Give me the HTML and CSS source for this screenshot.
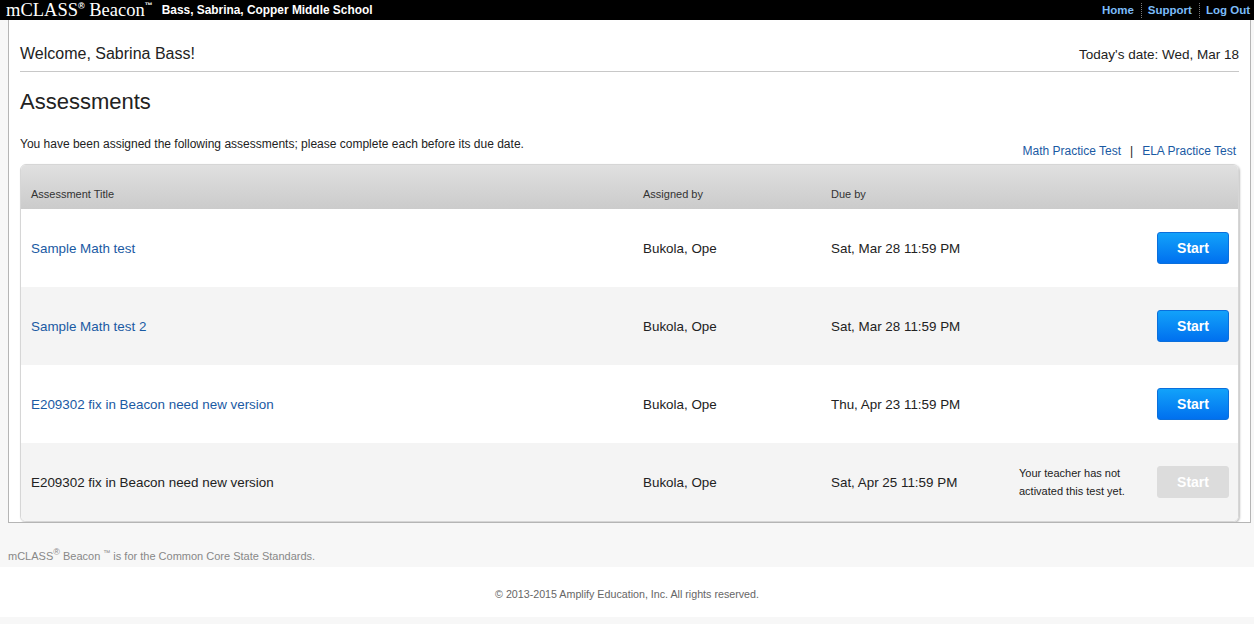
FILE: index.html
```html
<!DOCTYPE html>
<html>
<head>
<meta charset="utf-8">
<link rel="stylesheet" href="styles.css">
</head>
<body>
<header class="topbar">
  <div class="brand">
    <span class="logo">mCLASS<sup class="reg">®</sup> Beacon<sup class="tm">™</sup></span>
    <span class="school">Bass, Sabrina, Copper Middle School</span>
  </div>
  <nav class="nav">
    <a href="#">Home</a><span class="sep"></span><a href="#">Support</a><span class="sep"></span><a href="#">Log Out</a>
  </nav>
</header>
<main class="container">
  <div class="welcome">
    <span class="hello">Welcome, Sabrina Bass!</span>
    <span class="date">Today's date: Wed, Mar 18</span>
  </div>
  <h1 class="title">Assessments</h1>
  <div class="intro">
    <p class="intro-text">You have been assigned the following assessments; please complete each before its due date.</p>
    <div class="practice"><a href="#">Math Practice Test</a><span class="bar">|</span><a href="#">ELA Practice Test</a></div>
  </div>
  <div class="table">
    <div class="row head">
      <div>Assessment Title</div><div>Assigned by</div><div>Due by</div><div></div><div></div>
    </div>
    <div class="row">
      <div><a href="#">Sample Math test</a></div><div>Bukola, Ope</div><div>Sat, Mar 28 11:59 PM</div><div></div><div><button class="btn">Start</button></div>
    </div>
    <div class="row alt">
      <div><a href="#">Sample Math test 2</a></div><div>Bukola, Ope</div><div>Sat, Mar 28 11:59 PM</div><div></div><div><button class="btn">Start</button></div>
    </div>
    <div class="row">
      <div><a href="#">E209302 fix in Beacon need new version</a></div><div>Bukola, Ope</div><div>Thu, Apr 23 11:59 PM</div><div></div><div><button class="btn">Start</button></div>
    </div>
    <div class="row alt">
      <div>E209302 fix in Beacon need new version</div><div>Bukola, Ope</div><div>Sat, Apr 25 11:59 PM</div><div class="note">Your teacher has not<br>activated this test yet.</div><div><button class="btn disabled" disabled>Start</button></div>
    </div>
  </div>
</main>
<div class="standards">mCLASS<sup>®</sup> Beacon <sup class="tm2">™</sup> is for the Common Core State Standards.</div>
<footer class="copyright">© 2013-2015 Amplify Education, Inc. All rights reserved.</footer>
</body>
</html>
```
FILE: styles.css
```css
html, body {
  margin: 0;
  padding: 0;
  background: #f7f7f7;
  font-family: "Liberation Sans", Arial, sans-serif;
  color: #222;
}
a { text-decoration: none; }

.topbar {
  height: 20px;
  background: #000;
  display: flex;
  justify-content: space-between;
  align-items: center;
  padding: 0 4px 0 6px;
}
.brand { display: flex; align-items: center; }
.logo {
  font-family: "Liberation Serif", "Times New Roman", serif;
  font-size: 18.5px;
  color: #fff;
  line-height: 20px;
}
.logo sup { font-family: "Liberation Sans", Arial, sans-serif; font-weight: bold; line-height: 0; }
.logo .reg { font-size: 9px; vertical-align: 7px; }
.logo .tm { font-size: 8px; vertical-align: 8px; }
.school {
  margin-left: 9px;
  font-size: 11.9px;
  font-weight: bold;
  color: #fff;
}
.nav { display: flex; align-items: center; }
.nav a {
  color: #7cbcf8;
  font-size: 11.5px;
  font-weight: bold;
}
.sep {
  display: inline-block;
  height: 15px;
  border-left: 1px dotted #777;
  margin: 0 6px 0 7px;
}

.container {
  margin: 0 3px 0 8px;
  background: #fff;
  border: 1px solid #b5b5b5;
  border-top: none;
  padding: 0 11px;
  overflow: hidden;
}
.welcome {
  display: flex;
  justify-content: space-between;
  align-items: center;
  height: 52px;
  border-bottom: 1px solid #c8c8c8;
  box-sizing: border-box;
}
.hello { font-size: 16px; color: #222; padding-top: 16px; }
.date { font-size: 13.5px; color: #222; padding-top: 17px; }
.title {
  margin: 0;
  font-weight: normal;
  font-size: 22px;
  color: #222;
  padding-top: 17px;
  line-height: 26px;
}
.intro {
  display: flex;
  justify-content: space-between;
  align-items: flex-start;
  height: 49px;
  box-sizing: border-box;
  padding-top: 20px;
}
.intro-text { margin: 0; font-size: 12px; line-height: 14px; padding-top: 2px; }
.practice { font-size: 12px; padding-top: 9px; line-height: 14px; margin-right: 3px; }
.practice a { color: #1a5aa3; }
.bar { margin: 0 9px; color: #222; }

.table {
  border: 1px solid #d6d6d6;
  border-radius: 6px;
  box-shadow: 1px 1px 2px rgba(0,0,0,0.25);
  overflow: hidden;
}
.row {
  display: grid;
  grid-template-columns: 612px 188px 188px 1fr 72px;
  align-items: center;
  height: 78px;
  padding: 0 9px 0 10px;
  font-size: 13.4px;
  color: #222;
  background: #fff;
}
.row.alt { background: #f4f4f4; }
.row a { color: #1a5aa3; }
.row.head {
  height: 44px;
  background: linear-gradient(#e0e0e0, #cbcbcb);
  font-size: 11px;
  color: #333;
  align-items: end;
  padding-bottom: 9px;
  box-sizing: border-box;
}
.note { font-size: 11px; line-height: 18px; color: #222; }
.btn {
  width: 72px;
  height: 32px;
  border: 1px solid #0a6fdc;
  border-radius: 3px;
  background: linear-gradient(#12a2fa, #0070ef);
  color: #fff;
  font-family: "Liberation Sans", Arial, sans-serif;
  font-weight: bold;
  font-size: 14px;
  padding: 0;
}
.btn.disabled {
  background: #dcdcdc;
  border-color: #dcdcdc;
  color: #fff;
}

.standards {
  height: 44px;
  box-sizing: border-box;
  padding: 26px 0 0 8px;
  font-size: 11px;
  color: #888;
  line-height: 14px;
}
.standards sup { font-size: 9px; line-height: 0; }
.standards .tm2 { font-size: 7px; }
.copyright {
  height: 50px;
  background: #fff;
  text-align: center;
  font-size: 10.7px;
  color: #666;
  line-height: 54px;
}
```
